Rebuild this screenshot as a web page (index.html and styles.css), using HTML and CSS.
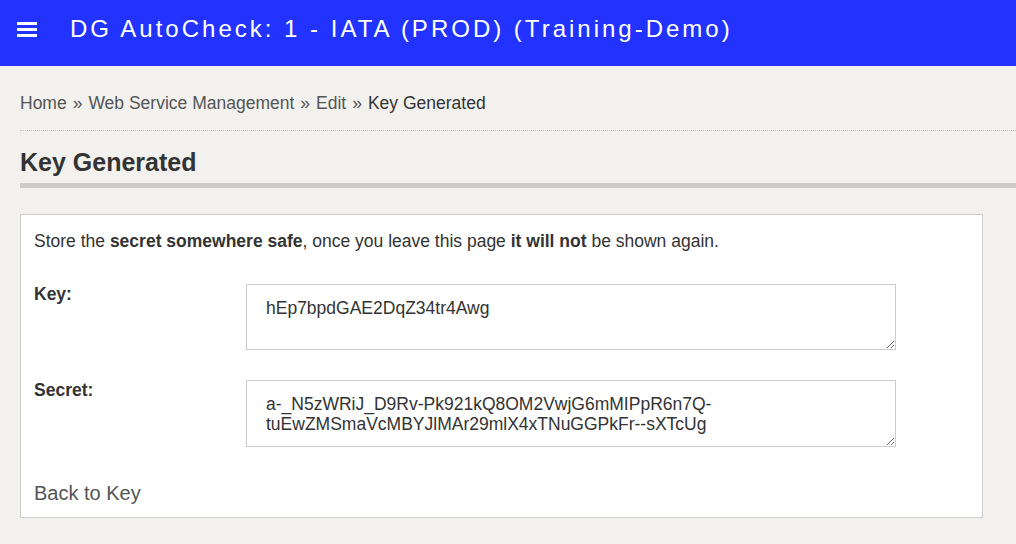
FILE: index.html
```html
<!DOCTYPE html>
<html>
<head>
  <meta name="viewport" content="width=device-width, initial-scale=1.0">
  <title>Key Generated</title>
  <link rel="stylesheet" href="styles.css">
</head>
<body>
  <div class="header">
    <svg class="menu-icon" width="20" height="17" viewBox="0 0 20 17">
      <rect x="0" y="1" width="20" height="3" fill="#fff"/>
      <rect x="0" y="7" width="20" height="3" fill="#fff"/>
      <rect x="0" y="13" width="20" height="3" fill="#fff"/>
    </svg>
    <h1 class="app-title">DG AutoCheck: 1 - IATA (PROD) (Training-Demo)</h1>
  </div>

  <div class="content">
    <div class="breadcrumb">
      <a href="#">Home</a><span class="sep">&raquo;</span><a href="#">Web Service Management</a><span class="sep">&raquo;</span><a href="#">Edit</a><span class="sep">&raquo;</span><span class="current">Key Generated</span>
    </div>

    <h2 class="page-title">Key Generated</h2>

    <div class="panel">
      <p class="notice">Store the <b>secret somewhere safe</b>, once you leave this page <b>it will not</b> be shown again.</p>

      <div class="field-row">
        <label for="key">Key:</label>
        <textarea id="key" readonly>hEp7bpdGAE2DqZ34tr4Awg</textarea>
      </div>

      <div class="field-row secret-row">
        <label for="secret">Secret:</label>
        <textarea id="secret" readonly>a-_N5zWRiJ_D9Rv-Pk921kQ8OM2VwjG6mMIPpR6n7Q-tuEwZMSmaVcMBYJlMAr29mlX4xTNuGGPkFr--sXTcUg</textarea>
      </div>

      <a class="back-link" href="#">Back to Key</a>
    </div>
  </div>
</body>
</html>
```

FILE: styles.css
```css
body {
  font-family: "Liberation Sans", Arial, sans-serif;
  background-color: #f2f1ee;
  color: #333;
  margin: 0;
}

.header {
  display: flex;
  align-items: center;
  height: 66px;
  box-sizing: border-box;
  background-color: #2233ff;
  padding: 0 0 8px 17px;
}

.menu-icon {
  display: block;
}

.app-title {
  margin: 0 0 0 33px;
  font-size: 24px;
  font-weight: normal;
  letter-spacing: 3px;
  color: #fff;
}

.content {
  padding: 27px 0 0 20px;
}

.breadcrumb {
  font-size: 17.5px;
  line-height: 20px;
  color: #555;
  padding-bottom: 17px;
  border-bottom: 1px dotted #c8c8c8;
}

.breadcrumb a {
  color: #555;
  text-decoration: none;
}

.breadcrumb .sep {
  margin: 0 6px;
}

.breadcrumb .current {
  color: #333;
}

.page-title {
  margin: 17px 0 0 0;
  font-size: 25px;
  font-weight: bold;
  color: #333;
  padding-bottom: 6px;
  border-bottom: 5px solid #cbcbcb;
}

.panel {
  margin: 26px 33px 0 0;
  background-color: #fff;
  border: 1px solid #ccc;
  padding: 16px 13px 12px 13px;
}

.notice {
  margin: 0;
  font-size: 17.5px;
  line-height: 20px;
}

.field-row {
  display: flex;
  align-items: flex-start;
  margin-top: 33px;
}

.secret-row {
  margin-top: 30px;
}

.field-row label {
  width: 212px;
  flex-shrink: 0;
  font-size: 17.5px;
  font-weight: bold;
  line-height: 20px;
}

textarea {
  width: 650px;
  height: 66px;
  box-sizing: border-box;
  padding: 13px 19px;
  border: 1px solid #ccc;
  font-family: "Liberation Sans", Arial, sans-serif;
  font-size: 17.5px;
  line-height: 20px;
  color: #333;
  background-color: #fff;
}

#secret {
  height: 67px;
}

.back-link {
  display: inline-block;
  margin-top: 35px;
  font-size: 20px;
  line-height: 23px;
  color: #555;
  text-decoration: none;
}
```
